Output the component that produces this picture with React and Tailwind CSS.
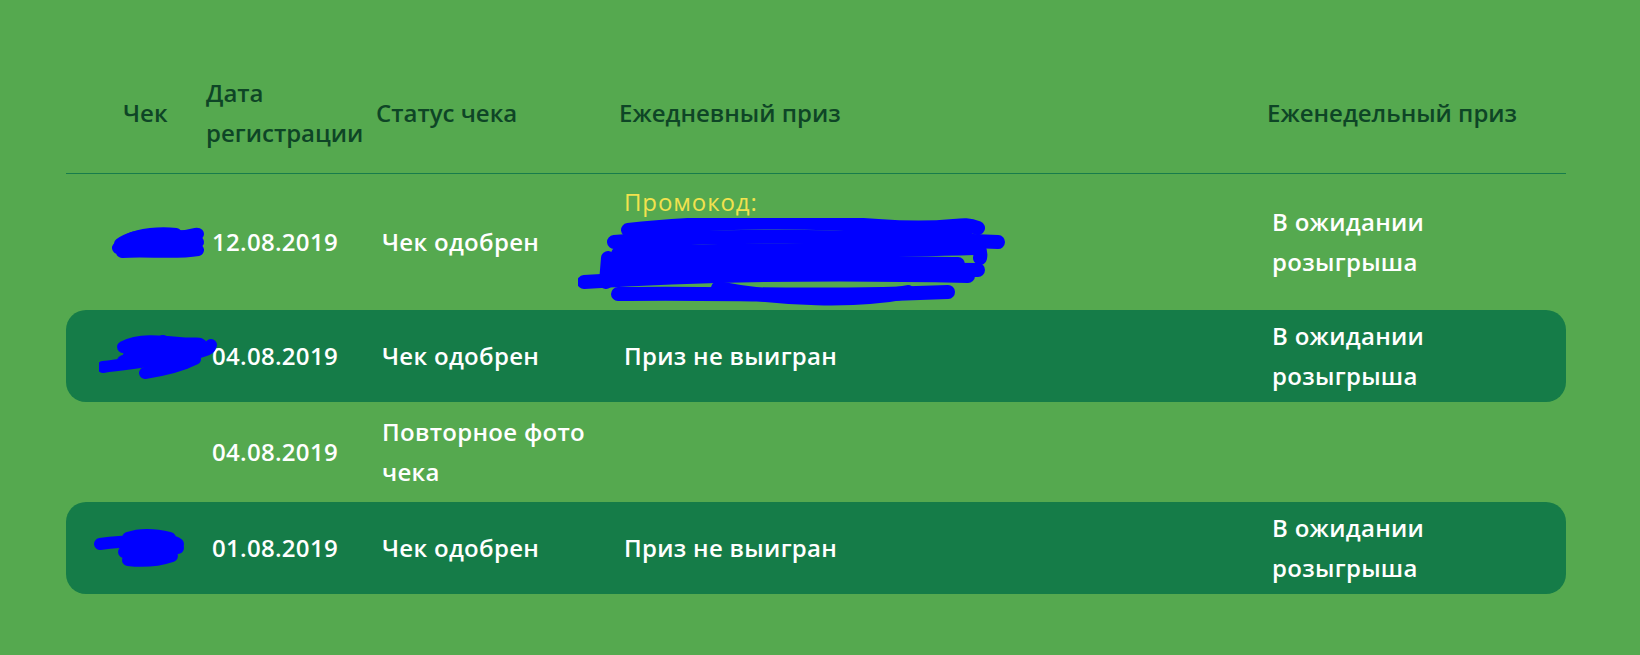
const rows = [
  {
    id: 1,
    date: "12.08.2019",
    status: ["Чек одобрен"],
    daily: "promo",
    weekly: true,
    dark: false,
    pad: "py-[8px]",
    scribble: "s1",
  },
  {
    id: 2,
    date: "04.08.2019",
    status: ["Чек одобрен"],
    daily: "Приз не выигран",
    weekly: true,
    dark: true,
    pad: "py-[6px]",
    scribble: "s2",
  },
  {
    id: 3,
    date: "04.08.2019",
    status: ["Повторное фото", "чека"],
    daily: "",
    weekly: false,
    dark: false,
    pad: "py-[10px]",
    scribble: null,
  },
  {
    id: 4,
    date: "01.08.2019",
    status: ["Чек одобрен"],
    daily: "Приз не выигран",
    weekly: true,
    dark: true,
    pad: "py-[6px]",
    scribble: "s3",
  },
];

// blue marker strokes that hide the receipt numbers in the original screenshot
const scribbles = {
  s1: {
    w: 100, h: 40, x: 44,
    d: [
      "M10 22 C20 14 40 12 60 14 S86 10 88 12",
      "M8 26 C30 22 60 24 88 20",
      "M12 30 C35 28 65 32 88 28",
      "M18 18 C30 12 50 10 66 12",
    ],
  },
  s2: {
    w: 120, h: 46, x: 33,
    d: [
      "M4 34 C30 30 60 28 88 22 S110 14 112 12",
      "M24 14 C40 6 60 8 80 10 S100 8 104 14",
      "M30 22 C50 18 70 16 100 18",
      "M46 40 C60 38 80 34 96 26",
      "M24 28 C40 22 60 24 86 30",
      "M64 8 L66 18",
    ],
  },
  s3: {
    w: 100, h: 44, x: 28,
    d: [
      "M6 18 C20 16 40 14 60 16 S80 14 84 18",
      "M34 12 C45 8 60 8 76 12",
      "M30 26 C45 24 65 26 84 22",
      "M34 34 C50 36 66 34 78 30",
    ],
  },
};

function Scribble({ s }) {
  const sc = scribbles[s];
  return (
    <svg
      width={sc.w}
      height={sc.h}
      viewBox={`0 0 ${sc.w} ${sc.h}`}
      className="absolute top-1/2 -translate-y-1/2"
      style={{ left: sc.x }}
    >
      {sc.d.map((d, i) => (
        <path key={i} d={d} fill="none" stroke="#0000ff" strokeWidth="12" strokeLinecap="round" strokeLinejoin="round" />
      ))}
    </svg>
  );
}

function PromoScribble() {
  const lines = [
    "M50 12 C120 4 220 2 300 8 S380 2 400 10",
    "M36 24 C140 16 260 18 420 24",
    "M40 36 C150 30 280 34 396 30",
    "M30 48 C130 40 250 44 380 46",
    "M6 64 C100 58 220 54 390 58",
    "M40 76 C150 74 230 80 370 74",
    "M60 30 C120 40 200 44 300 46",
    "M36 56 C140 52 260 50 400 52",
    "M370 12 C390 20 405 26 402 40",
    "M30 40 L28 64",
    "M140 70 C200 82 280 84 330 74",
  ];
  return (
    <svg width="450" height="90" viewBox="0 0 450 90" className="absolute left-[-46px] top-[-4px]">
      {lines.map((d, i) => (
        <path key={i} d={d} fill="none" stroke="#0000ff" strokeWidth="14" strokeLinecap="round" strokeLinejoin="round" />
      ))}
    </svg>
  );
}

export default function App() {
  return (
    <div
      className="min-h-[655px] w-full bg-[#55a94f] pt-[73px]"
      style={{ fontFamily: '"Open Sans", "Liberation Sans", sans-serif' }}
    >
      <div className="ml-[66px] w-[1500px] text-[24px] font-semibold leading-[40px]">
        <div className="grid grid-cols-[140px_170px_243px_648px_1fr] items-center border-b border-[#177c4b] pb-[20px] text-[#0e4526]">
          <div className="pl-[57px]">Чек</div>
          <div className="whitespace-nowrap">
            Дата
            <br />
            регистрации
          </div>
          <div>Статус чека</div>
          <div>Ежедневный приз</div>
          <div>Еженедельный приз</div>
        </div>

        {rows.map((r) => (
          <div
            key={r.id}
            className={`grid grid-cols-[140px_170px_243px_648px_1fr] items-center tracking-[0.3px] text-white ${r.pad} ${
              r.dark ? "rounded-[20px] bg-[#157c48]" : ""
            }`}
          >
            <div className="relative h-[40px]">{r.scribble && <Scribble s={r.scribble} />}</div>
            <div className="pl-[6px]">{r.date}</div>
            <div className="pl-[6px]">
              {r.status.map((t) => (
                <div key={t}>{t}</div>
              ))}
            </div>
            <div className="pl-[5px]">
              {r.daily === "promo" ? (
                <div>
                  <div className="font-medium tracking-[0.9px] text-[#f2e24e]">Промокод:</div>
                  <div className="relative h-[80px]">
                    <PromoScribble />
                  </div>
                </div>
              ) : (
                r.daily
              )}
            </div>
            <div className="pl-[5px]">
              {r.weekly && (
                <>
                  <div>В ожидании</div>
                  <div>розыгрыша</div>
                </>
              )}
            </div>
          </div>
        ))}
      </div>
    </div>
  );
}
